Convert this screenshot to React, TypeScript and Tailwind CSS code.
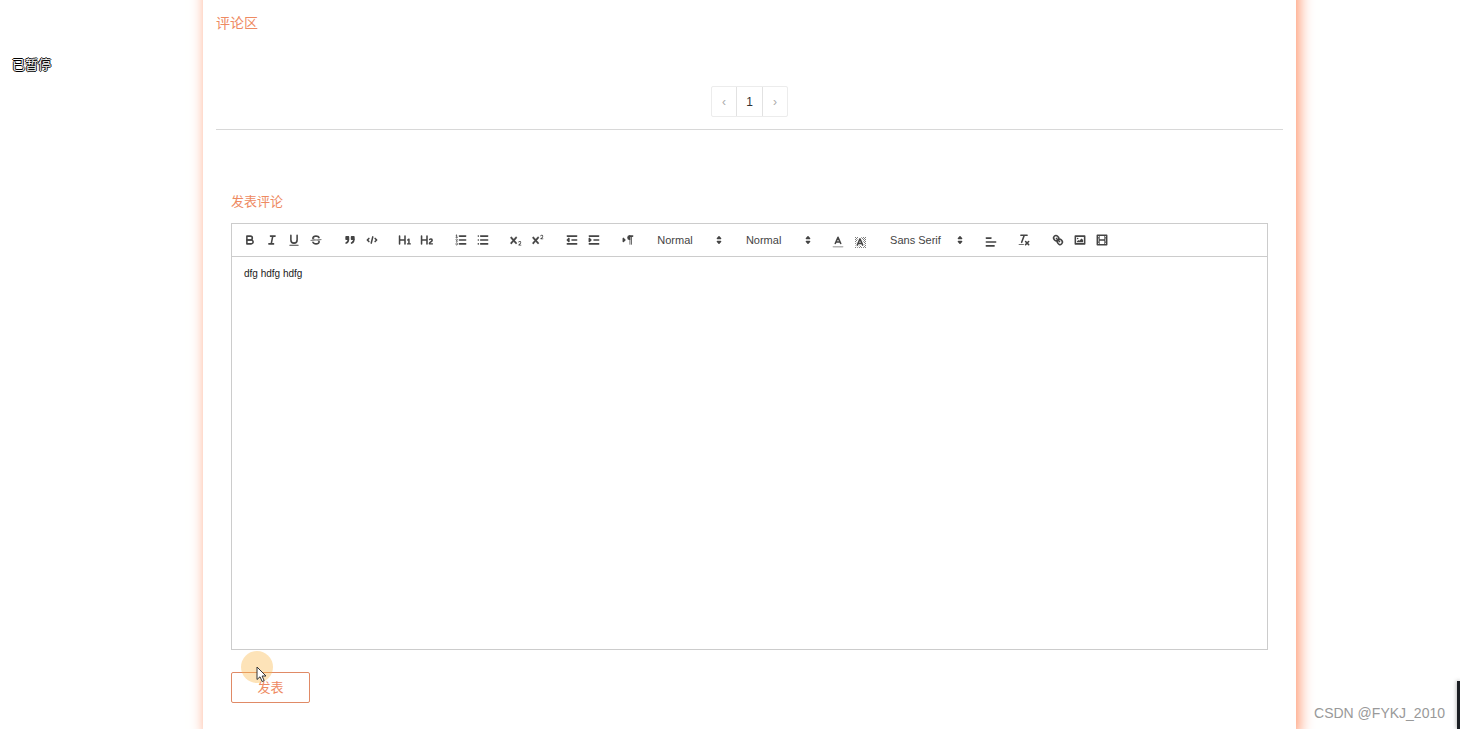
import React, { ReactNode } from 'react';

const CROSS =
  'M9.65,5.241a1,1,0,0,0-1.409.108L6,7.964,3.759,5.349A1,1,0,0,0,2.192,6.59178Q2.21541,6.6213,2.241,6.649L4.684,9.5,2.241,12.35A1,1,0,0,0,3.71,13.70722q0.02557-.02768.049-0.05722L6,11.036,8.241,13.65a1,1,0,1,0,1.567-1.24277Q9.78459,12.3777,9.759,12.35L7.316,9.5,9.759,6.651A1,1,0,0,0,9.65,5.241Z';

function Icon({ children }: { children: ReactNode }) {
  return (
    <svg
      viewBox="0 0 18 18"
      className="size-[14px] shrink-0"
      fill="none"
      stroke="#444"
      strokeWidth={2}
      strokeLinecap="round"
      strokeLinejoin="round"
      aria-hidden="true"
    >
      {children}
    </svg>
  );
}

const solid = { fill: '#444', stroke: 'none' };

const icons: Record<string, ReactNode> = {
  bold: (
    <>
      <path d="M5,4H9.5A2.5,2.5,0,0,1,12,6.5v0A2.5,2.5,0,0,1,9.5,9H5V4Z" />
      <path d="M5,9h5.5A2.5,2.5,0,0,1,13,11.5v0A2.5,2.5,0,0,1,10.5,14H5V9Z" />
    </>
  ),
  italic: <path d="M7,4H13M5,14H11M8,14L10,4" />,
  underline: (
    <>
      <path d="M5,3V9a4.012,4.012,0,0,0,4,4H9a4.012,4.012,0,0,0,4-4V3" />
      <rect {...solid} height="1.3" width="12" x="3" y="15" rx="0.5" />
    </>
  ),
  strike: (
    <>
      <path strokeWidth={1} d="M15.5,8.5L2.5,9.5" />
      <path {...solid} d="M9.007,8C6.542,7.791,6,7.519,6,6.5,6,5.792,7.283,5,9,5c1.571,0,2.765.679,2.969,1.309a1,1,0,0,0,1.9-.617C13.356,4.106,11.354,3,9,3,6.2,3,4,4.538,4,6.5a3.2,3.2,0,0,0,.5,1.843Z" />
      <path {...solid} d="M8.984,10C11.457,10.208,12,10.479,12,11.5c0,.708-1.283,1.5-3,1.5-1.571,0-2.765-.679-2.969-1.309a1,1,0,1,0-1.9.617C4.644,13.894,6.646,15,9,15c2.8,0,5-1.538,5-3.5a3.2,3.2,0,0,0-.5-1.843Z" />
    </>
  ),
  quote: (
    <g fill="#444">
      <rect height="3" width="3" x="4" y="5" />
      <rect height="3" width="3" x="11" y="5" />
      <path d="M7,8c0,4.031-3,5-3,5" />
      <path d="M14,8c0,4.031-3,5-3,5" />
    </g>
  ),
  code: <path d="M5,7L3,9L5,11M13,7L15,9L13,11M10,5L8,13" />,
  h1: (
    <path {...solid} d="M10,4V14a1,1,0,0,1-2,0V10H3v4a1,1,0,0,1-2,0V4A1,1,0,0,1,3,4V8H8V4a1,1,0,0,1,2,0Zm6.06787,9.209H14.98975V7.59863a.54085.54085,0,0,0-.605-.60547h-.62744a1.01119,1.01119,0,0,0-.748.29688L11.645,8.56641a.5435.5435,0,0,0-.022.8584l.28613.30762a.53861.53861,0,0,0,.84717.0332l.09912-.08789a1.2137,1.2137,0,0,0,.2417-.35254h.02246s-.01123.30859-.01123.60547V13.209H12.041a.54085.54085,0,0,0-.605.60547v.43945a.54085.54085,0,0,0,.605.60547h4.02686a.54085.54085,0,0,0,.605-.60547v-.43945A.54085.54085,0,0,0,16.06787,13.209Z" />
  ),
  h2: (
    <path {...solid} d="M16.73975,13.81445v.43945a.54085.54085,0,0,1-.605.60547H11.855a.58392.58392,0,0,1-.64893-.60547V14.0127c0-2.90527,3.39941-3.42187,3.39941-4.55469a.77675.77675,0,0,0-.84717-.78125,1.17684,1.17684,0,0,0-.83594.38477c-.2749.26367-.561.374-.85791.13184l-.4292-.34082c-.30811-.24219-.38525-.51758-.1543-.81445a2.97155,2.97155,0,0,1,2.45361-1.17676,2.45393,2.45393,0,0,1,2.68408,2.40918c0,2.45312-3.1792,2.92676-3.27832,3.93848h2.79443A.54085.54085,0,0,1,16.73975,13.81445ZM9,3A.99974.99974,0,0,0,8,4V8H3V4A1,1,0,0,0,1,4V14a1,1,0,0,0,2,0V10H8v4a1,1,0,0,0,2,0V4A.99974.99974,0,0,0,9,3Z" />
  ),
  ordered: (
    <>
      <path d="M7,4H15M7,9H15M7,14H15" />
      <path strokeWidth={1} d="M2.5,5.5H4.5M4.5,10.5h-2c0-.234,1.85-1.076,1.85-2.234A0.959,0.959,0,0,0,2.5,8.156M2.5,14.846a0.959,0.959,0,0,0,1.85-.109A0.7,0.7,0,0,0,3.75,14a0.688,0.688,0,0,0,.6-0.736,0.959,0.959,0,0,0-1.85-.109" />
      <path {...solid} d="M3.5,6A0.5,0.5,0,0,1,3,5.5V3.085l-0.276.138A0.5,0.5,0,0,1,2.053,3c-0.124-.247-0.023-0.324.224-0.447l1-.5A0.5,0.5,0,0,1,4,2.5v3A0.5,0.5,0,0,1,3.5,6Z" />
    </>
  ),
  bullet: <path d="M6,4H15M6,9H15M6,14H15M3,4H3.01M3,9H3.01M3,14H3.01" />,
  sub: (
    <>
      <path {...solid} d="M15.5,15H13.861a3.858,3.858,0,0,0,1.914-2.975,1.8,1.8,0,0,0-1.6-1.751A1.921,1.921,0,0,0,12.021,11.7a0.50013,0.50013,0,1,0,.957.291h0a0.914,0.914,0,0,1,1.053-.725,0.81,0.81,0,0,1,.744.762c0,1.076-1.16971,1.86982-1.93971,2.43082A1.45639,1.45639,0,0,0,12,15.5a0.5,0.5,0,0,0,.5.5h3A0.5,0.5,0,0,0,15.5,15Z" />
      <path {...solid} d={CROSS} stroke="#444" strokeWidth={0.5} />
    </>
  ),
  sup: (
    <>
      <path {...solid} d="M15.5,7H13.861a4.015,4.015,0,0,0,1.914-2.975,1.8,1.8,0,0,0-1.6-1.751A1.922,1.922,0,0,0,12.021,3.7a0.5,0.5,0,1,0,.957.291,0.917,0.917,0,0,1,1.053-.725,0.81,0.81,0,0,1,.744.762c0,1.077-1.164,1.925-1.934,2.486A1.423,1.423,0,0,0,12,7.5a0.5,0.5,0,0,0,.5.5h3A0.5,0.5,0,0,0,15.5,7Z" />
      <path {...solid} d={CROSS} stroke="#444" strokeWidth={0.5} />
    </>
  ),
  outdent: <path d="M3,14H15M3,4H15M9,9H15M5,7V11L3,9Z" />,
  indent: (
    <>
      <path d="M3,14H15M3,4H15M9,9H15" />
      <path fill="#444" d="M3,7V11L5,9Z" />
    </>
  ),
  direction: (
    <>
      <path fill="#444" d="M3,11L5,9L3,7Z" />
      <path d="M15,4H11" />
      <path {...solid} d="M11,3a3,3,0,0,0,0,6h1V3H11Z" />
      <rect {...solid} height="11" width="1" x="11" y="4" />
      <rect {...solid} height="11" width="1" x="13" y="4" />
    </>
  ),
  updown: <path fill="#444" d="M7,11L9,13L11,11ZM7,7L9,5L11,7Z" />,
  color: (
    <>
      <path opacity={0.4} d="M3,15H15" />
      <path d="M5.5,11L9,3L12.5,11M11.63,9H6.38" />
    </>
  ),
  background: (
    <>
      <defs>
        <pattern id="weave" width="2.5714" height="2.5714" patternUnits="userSpaceOnUse">
          <rect {...solid} width="1.2857" height="1.2857" />
          <rect {...solid} width="1.2857" height="1.2857" x="1.2857" y="1.2857" />
        </pattern>
      </defs>
      <rect x="2.5714" y="2.5714" width="14.1428" height="14.1428" fill="url(#weave)" stroke="none" opacity={0.7} />
      <path stroke="#fff" strokeWidth={5} d="M5.5,13L9,5L12.5,13M11.63,11H6.38" />
      <path d="M5.5,13L9,5L12.5,13M11.63,11H6.38" />
    </>
  ),
  align: <path d="M3,9H15M3,14H13M3,4H9" />,
  clean: (
    <>
      <path d="M5,3H13M6,12L9.35,3M11,11L15,15M15,11L11,15" />
      <rect {...solid} height="1" rx="0.5" width="7" x="2" y="14" />
    </>
  ),
  link: (
    <path d="M7,7L11,11M8.9,4.577a3.476,3.476,0,0,1,.36,4.679A3.476,3.476,0,0,1,4.577,8.9C3.185,7.5,2.035,6.4,4.217,4.217S7.5,3.185,8.9,4.577ZM13.423,9.1a3.476,3.476,0,0,0-4.679-.36,3.476,3.476,0,0,0,.36,4.679c1.392,1.392,2.5,2.542,4.679.36S14.815,10.5,13.423,9.1Z" />
  ),
  image: (
    <>
      <rect height="10" width="12" x="3" y="4" />
      <circle {...solid} cx="6" cy="7" r="1" />
      <path {...solid} d="M5,12V11L7,9L8,10L11,7L13,9V12Z" />
    </>
  ),
  video: (
    <>
      <rect height="12" width="12" x="3" y="3" />
      <path {...solid} d="M5,3h1v12h-1zM12,3h1v12h-1zM5,8h8v2h-8zM3,5h3v1h-3zM3,7h3v1h-3zM3,10h3v1h-3zM3,12h3v1h-3zM12,5h3v1h-3zM12,7h3v1h-3zM12,10h3v1h-3zM12,12h3v1h-3z" />
    </>
  ),
};

function Tools({ names, low = false }: { names: string[]; low?: boolean }) {
  return (
    <div className={low ? 'flex pt-0.5' : 'flex'}>
      {names.map((name) => (
        <button key={name} type="button" aria-label={name} className="flex h-5 w-[22px] items-center justify-center">
          <Icon>{icons[name]}</Icon>
        </button>
      ))}
    </div>
  );
}

function Picker({ label, value, wide = false }: { label: string; value: string; wide?: boolean }) {
  return (
    <div className={wide ? 'relative flex h-5 w-[85px] items-center' : 'relative flex h-5 w-[77px] items-center'}>
      <select
        aria-label={label}
        className="h-5 w-full appearance-none bg-transparent pl-[7px] text-[11px] leading-5 text-[#444] outline-none"
      >
        <option>{value}</option>
      </select>
      <span className="pointer-events-none absolute right-px">
        <Icon>{icons.updown}</Icon>
      </span>
    </div>
  );
}

export default function App() {
  return (
    <div className="relative flex min-h-screen overflow-hidden bg-white font-['Liberation_Sans','Noto_Sans_CJK_SC',sans-serif]">
      <aside className="w-[203px] shrink-0 pt-[54px] pl-3">
        <p className="text-[13px] leading-[22px] text-white [text-shadow:1px_0_#000,-1px_0_#000,0_1px_#000,0_-1px_#000]">已暂停</p>
      </aside>

      <main className="-mt-4 -mb-2 mr-[164px] flex min-w-0 flex-1 flex-col bg-white px-[13px] pt-4 shadow-[3px_0_14px_#ff936a]">
        <section className="flex flex-col border-b border-[#d8d8d8] pt-3 pb-3">
          <h2 className="text-[14px] leading-[22px] text-[#ee8a62]">评论区</h2>
          <nav aria-label="分页" className="mt-[52px] flex h-[31px] self-center rounded-xs border border-[#ececec] text-[12px]">
            <button type="button" aria-label="上一页" className="w-6 text-[#aaa]">‹</button>
            <button type="button" className="w-[27px] border-x border-[#e2e2e2] text-[#333]">1</button>
            <button type="button" aria-label="下一页" className="w-6 text-[#aaa]">›</button>
          </nav>
        </section>

        <form className="flex flex-col px-[15px] pt-[61px]" onSubmit={(e) => e.preventDefault()}>
          <label htmlFor="comment" className="text-[13px] leading-[22px] text-[#ee8a62]">发表评论</label>
          <div className="mt-[10px] flex flex-col border border-[#ccc]">
            <div className="border-b border-[#ccc] px-[7px] py-1.5">
              <div className="flex h-5 w-[874px] max-w-full justify-between">
                <Tools names={['bold', 'italic', 'underline', 'strike']} />
                <Tools names={['quote', 'code']} />
                <Tools names={['h1', 'h2']} />
                <Tools names={['ordered', 'bullet']} />
                <Tools names={['sub', 'sup']} />
                <Tools names={['outdent', 'indent']} />
                <Tools names={['direction']} />
                <Picker label="字号" value="Normal" />
                <Picker label="标题" value="Normal" />
                <Tools names={['color', 'background']} low />
                <Picker label="字体" value="Sans Serif" wide />
                <Tools names={['align']} low />
                <Tools names={['clean']} />
                <Tools names={['link', 'image', 'video']} />
              </div>
            </div>
            <textarea
              id="comment"
              defaultValue="dfg hdfg hdfg"
              className="h-[392px] resize-none px-3 py-2 text-[10px] leading-[18px] text-[#222] outline-none"
            />
          </div>
          <button
            type="submit"
            className="mt-[22px] h-[31px] w-[79px] rounded-xs border border-[#e08a66] text-[13px] text-[#ee8a62]"
          >
            发表
          </button>
        </form>
      </main>

      <div className="pointer-events-none absolute top-[651px] left-[241px] size-8 rounded-full bg-[#f9b84d]/40" />
      <svg className="pointer-events-none absolute top-[666px] left-[256px] h-[17px] w-[11px]" viewBox="0 0 11 17" aria-hidden="true">
        <path d="M1,1V13.5L4,10.8L6.2,15.5L8.2,14.6L6.1,10H10Z" fill="#fff" stroke="#333" strokeWidth="1" />
      </svg>
      <p className="absolute right-[15px] bottom-[5px] text-[14px] leading-[22px] text-[#999]">CSDN @FYKJ_2010</p>
      <div className="absolute right-0 bottom-0 h-12 w-[3px] bg-[#1c1f24] shadow-[0_0_4px_#999]" />
    </div>
  );
}
